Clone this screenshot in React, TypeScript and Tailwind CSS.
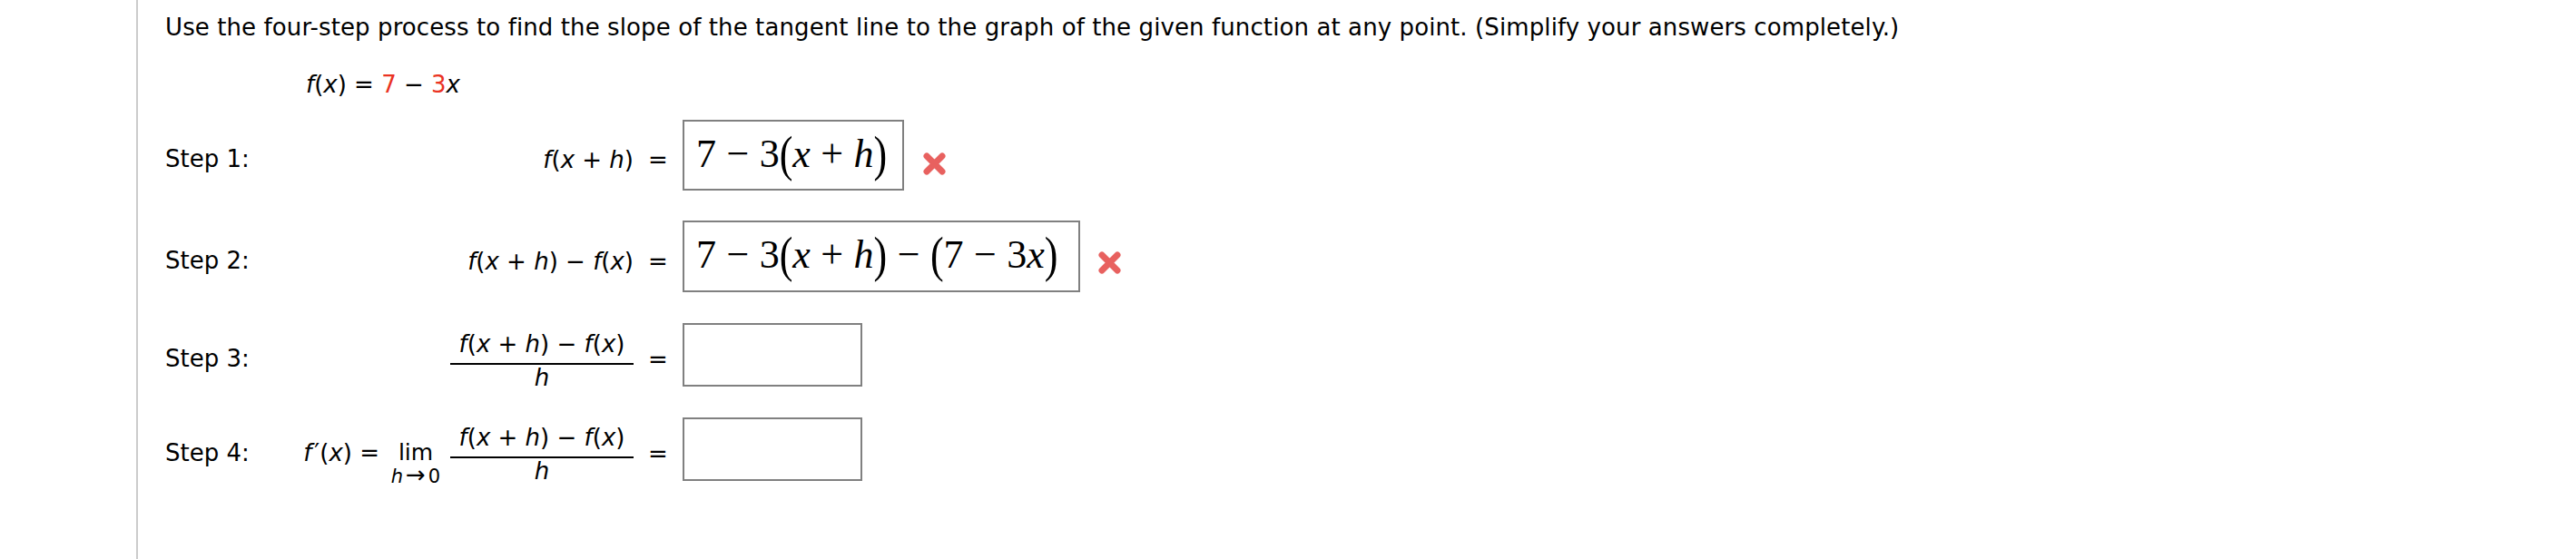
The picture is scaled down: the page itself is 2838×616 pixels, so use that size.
import type { ReactNode } from 'react'

const V = ({ children }: { children: ReactNode }) => <i className="italic">{children}</i>

// math pieces inside the answer boxes
const Op = ({ children }: { children: ReactNode }) => <span className="mx-[0.26em]">{children}</span>
const MV = ({ children }: { children: ReactNode }) => <i className="italic">{children}</i>
const Paren = ({ children }: { children: ReactNode }) => (
  <span className="inline-block scale-y-125 leading-none">{children}</span>
)

function XMark() {
  return (
    <svg width="27" height="27" viewBox="0 0 27 27" className="shrink-0">
      <path d="M5 5 L22 22 M22 5 L5 22" stroke="#e8615f" strokeWidth="7" strokeLinecap="round" />
    </svg>
  )
}

function Fraction() {
  return (
    <div className="flex w-[202px] flex-col items-center">
      <div className="pb-[7px] leading-[28px]">
        <V>f</V>(<V>x</V> + <V>h</V>) − <V>f</V>(<V>x</V>)
      </div>
      <div className="h-[2px] w-full bg-black" />
      <div className="leading-[28px]">
        <V>h</V>
      </div>
    </div>
  )
}

function Box({ width, height, children }: { width: string; height: string; children?: ReactNode }) {
  return (
    <div
      className={`${width} ${height} shrink-0 border-2 border-[#808080] pl-[13px] pt-[14px] whitespace-nowrap font-['Liberation_Serif','Times_New_Roman',serif] text-[44px] leading-[42px]`}
    >
      {children}
    </div>
  )
}

export default function App() {
  return (
    <div className="flex min-h-[616px] bg-white text-black font-['Verdana','DejaVu_Sans',sans-serif] text-[26px]">
      <div className="w-[150px] shrink-0" />
      <div className="flex-1 border-l-2 border-[#cccccc] pl-[30px] pt-[14px]">
        <p className="leading-[32px] tracking-[0.1px] whitespace-nowrap">
          Use the four-step process to find the slope of the tangent line to the graph of the given function at any
          point. (Simplify your answers completely.)
        </p>
        <p className="mt-[31px] ml-[155px] leading-[32px]">
          <V>f</V>(<V>x</V>) = <span className="text-[#ea3323]">7</span> − <span className="text-[#ea3323]">3</span>
          <V>x</V>
        </p>

        <div className="mt-[23px] flex flex-col">
          {/* Step 1 */}
          <div className="flex h-[78px] items-start">
            <div className="mt-[27px] w-[148px] leading-[32px]">Step 1:</div>
            <div className="mt-[28px] flex w-[368px] justify-end leading-[32px] whitespace-nowrap">
              <span>
                <V>f</V>(<V>x</V> + <V>h</V>)
              </span>
            </div>
            <div className="mt-[28px] w-[54px] text-center leading-[32px]">=</div>
            <Box width="w-[244px]" height="h-[78px]">
              7<Op>−</Op>3<Paren>(</Paren>
              <MV>x</MV>
              <Op>+</Op>
              <MV>h</MV>
              <Paren>)</Paren>
            </Box>
            <div className="ml-[20px] mt-[35px]">
              <XMark />
            </div>
          </div>

          {/* Step 2 */}
          <div className="mt-[33px] flex h-[79px] items-start">
            <div className="mt-[28px] w-[148px] leading-[32px]">Step 2:</div>
            <div className="mt-[29px] flex w-[368px] justify-end leading-[32px] whitespace-nowrap">
              <span>
                <V>f</V>(<V>x</V> + <V>h</V>) − <V>f</V>(<V>x</V>)
              </span>
            </div>
            <div className="mt-[29px] w-[54px] text-center leading-[32px]">=</div>
            <Box width="w-[438px]" height="h-[79px]">
              7<Op>−</Op>3<Paren>(</Paren>
              <MV>x</MV>
              <Op>+</Op>
              <MV>h</MV>
              <Paren>)</Paren>
              <Op>−</Op>
              <Paren>(</Paren>7<Op>−</Op>3<MV>x</MV>
              <Paren>)</Paren>
            </Box>
            <div className="ml-[19px] mt-[33px]">
              <XMark />
            </div>
          </div>

          {/* Step 3 */}
          <div className="mt-[34px] flex h-[70px] items-start">
            <div className="mt-[23px] w-[148px] leading-[32px]">Step 3:</div>
            <div className="mt-[9px] flex w-[368px] justify-end whitespace-nowrap">
              <Fraction />
            </div>
            <div className="mt-[24px] w-[54px] text-center leading-[32px]">=</div>
            <Box width="w-[198px]" height="h-[70px]" />
          </div>

          {/* Step 4 */}
          <div className="mt-[34px] flex h-[70px] items-start">
            <div className="mt-[23px] w-[148px] leading-[32px]">Step 4:</div>
            <div className="flex w-[368px] items-start justify-end whitespace-nowrap">
              <span className="mt-[23px] leading-[32px]">
                <V>f</V>
                <span className="ml-[3px]">′</span>(<V>x</V>) =
              </span>
              <div className="ml-[10px] mt-[25px] flex w-[60px] flex-col items-center">
                <span className="text-[25px] leading-[28px]">lim</span>
                <span className="flex items-baseline text-[21px] leading-[20px]">
                  <V>h</V>
                  <span className="mx-[3px] text-[26px]">→</span>0
                </span>
              </div>
              <div className="ml-[8px] mt-[8px]">
                <Fraction />
              </div>
            </div>
            <div className="mt-[24px] w-[54px] text-center leading-[32px]">=</div>
            <Box width="w-[198px]" height="h-[70px]" />
          </div>
        </div>
      </div>
    </div>
  )
}
